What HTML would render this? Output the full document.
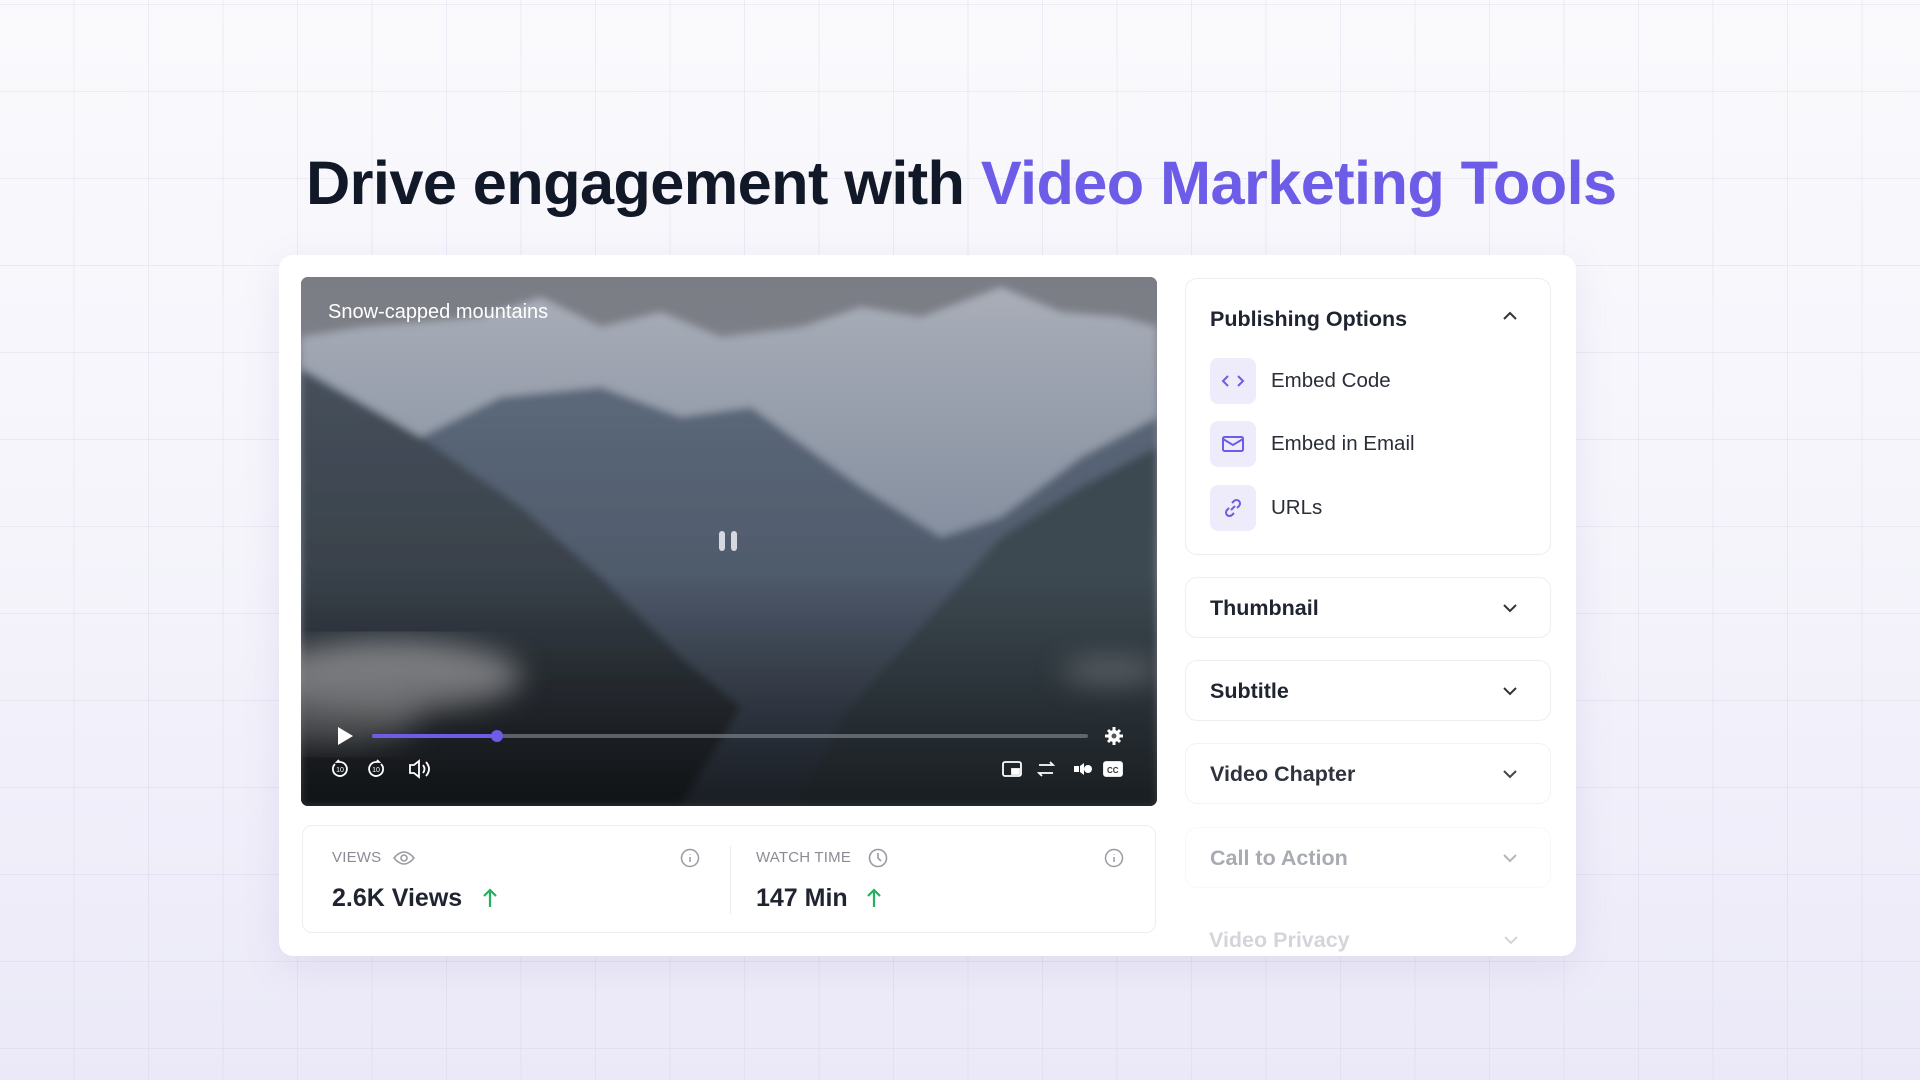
<!DOCTYPE html>
<html><head><meta charset="utf-8">
<style>
*{margin:0;padding:0;box-sizing:border-box}
body{width:1920px;height:1080px;overflow:hidden;font-family:"Liberation Sans",sans-serif;position:relative;
background:linear-gradient(180deg,#fafafd 0%,#f5f4fb 50%,#ebe9f8 100%);}
.grid{position:absolute;inset:0;background-image:linear-gradient(90deg,rgba(200,198,225,.28) 1px,transparent 1px),linear-gradient(0deg,rgba(200,198,225,.28) 1px,transparent 1px);background-size:74.5px 87px;background-position:-1px 5px}
h1{position:absolute;left:306px;top:148px;font-size:61.3px;font-weight:700;color:#111827;letter-spacing:-0.6px;white-space:nowrap}
h1 span{color:#6c5ce7}
.card{position:absolute;left:279px;top:255px;width:1297px;height:701px;background:#fff;border-radius:14px;box-shadow:0 10px 40px rgba(120,110,180,.12)}
.video{position:absolute;left:301px;top:277px;width:856px;height:529px;border-radius:7px;overflow:hidden;background:#5d6673}
.vt{position:absolute;left:27px;top:24px;color:#fff;font-size:20px}
.stats{position:absolute;left:302px;top:825px;width:854px;height:108px;border:1px solid #eeedf3;border-radius:10px}
.lab{position:absolute;font-size:15px;color:#8b8b95;letter-spacing:.2px}
.num{position:absolute;font-size:25px;font-weight:700;color:#1f2430}
.panel{position:absolute;left:1185px;width:366px;border:1px solid #eeedf3;border-radius:12px;background:#fff}
.pt{position:absolute;left:24px;font-size:21.5px;font-weight:700;color:#1f2430}
.chev{position:absolute;right:32px}
.ib{position:absolute;left:24px;width:46px;height:46px;border-radius:8px;background:#eeecfb;display:flex;align-items:center;justify-content:center}
.it{position:absolute;left:85px;font-size:20.5px;color:#2a2e38}
</style></head><body>
<div class="grid"></div>
<h1>Drive engagement with <span>Video Marketing Tools</span></h1>
<div class="card"></div>
<div class="video">
<svg width="856" height="529" viewBox="0 0 856 529">
<defs>
<linearGradient id="sky" x1="0" y1="0" x2="0" y2="1"><stop offset="0" stop-color="#7b7d85"/><stop offset="1" stop-color="#8a909c"/></linearGradient>
<linearGradient id="snow" x1="0" y1="0" x2="0" y2="1"><stop offset="0" stop-color="#a9aeb8"/><stop offset="1" stop-color="#7c889a"/></linearGradient>
<linearGradient id="mid" x1="0" y1="0" x2="0" y2="1"><stop offset="0" stop-color="#5d6a7c"/><stop offset="1" stop-color="#3f4958"/></linearGradient>
<linearGradient id="dark" x1="0" y1="0" x2="0" y2="1"><stop offset="0" stop-color="#46505b"/><stop offset="1" stop-color="#2a3036"/></linearGradient>
<linearGradient id="bot" x1="0" y1="0" x2="0" y2="1"><stop offset="0" stop-color="#000" stop-opacity="0"/><stop offset="1" stop-color="#000" stop-opacity=".6"/></linearGradient>
<filter id="bl"><feGaussianBlur stdDeviation="14"/></filter>
<filter id="bl2"><feGaussianBlur stdDeviation="4"/></filter>
</defs>
<rect width="856" height="529" fill="url(#sky)"/>
<g filter="url(#bl2)">
<polygon points="0,60 60,50 120,45 180,40 240,20 300,50 360,35 420,60 500,50 560,30 620,40 700,10 760,35 820,40 856,50 856,320 0,320" fill="url(#snow)"/>
<polygon points="0,90 120,160 200,120 300,110 380,140 450,130 560,210 640,260 700,240 780,180 856,140 856,529 0,529" fill="url(#mid)"/>
<polygon points="0,95 120,160 220,230 300,300 380,380 440,430 380,529 0,529" fill="url(#dark)"/>
<polygon points="856,170 780,210 700,260 620,350 540,440 500,529 856,529" fill="#3e4851"/>
</g>
<g filter="url(#bl)">
<ellipse cx="90" cy="400" rx="130" ry="35" fill="#c4c4c8" opacity=".75"/>
<ellipse cx="30" cy="440" rx="90" ry="30" fill="#b0b0b4" opacity=".6"/>
<ellipse cx="810" cy="395" rx="50" ry="12" fill="#bfc2c6" opacity=".5"/>
</g>
<rect y="300" width="856" height="229" fill="url(#bot)"/>
<rect x="418" y="254" width="6" height="20" rx="3" fill="#e4e6ec" opacity=".9"/>
<rect x="430" y="254" width="6" height="20" rx="3" fill="#e4e6ec" opacity=".9"/>
<polygon points="37,450 37,468 52,459" fill="#fff"/>
<rect x="71" y="457" width="716" height="4" rx="2" fill="#8a8d94" opacity=".6"/>
<rect x="71" y="457" width="125" height="4" rx="2" fill="#6c5ce7"/>
<circle cx="196" cy="459" r="6" fill="#6c5ce7"/>
<g fill="#fff"><circle cx="813" cy="459" r="6"/><g stroke="#fff" stroke-width="3"><line x1="813" y1="450" x2="813" y2="468"/><line x1="804" y1="459" x2="822" y2="459"/><line x1="807" y1="453" x2="819" y2="465"/><line x1="819" y1="453" x2="807" y2="465"/></g><circle cx="813" cy="459" r="2.5" fill="#555"/></g>
<g fill="none" stroke="#fff" stroke-width="1.8">
<path d="M34 487a7 7 0 1 0 5-2h-3l2-2"/><path d="M80 487a7 7 0 1 1-5-2h3l-2-2"/>
<path d="M109 488h4l5-4v16l-5-4h-4z M122 488q3 4 0 8 M125 485q6 7 0 14"/>
<rect x="702" y="485" width="18" height="14" rx="2"/><rect x="711" y="492" width="7" height="5" fill="#fff"/>
<path d="M738 488h14l-3-3 M752 496h-14l3 3"/>
<rect x="803" y="485" width="18" height="14" rx="2" fill="#fff"/>
</g>
<text x="39" y="495" font-size="7" fill="#fff" text-anchor="middle" font-family="Liberation Sans">10</text>
<text x="75" y="495" font-size="7" fill="#fff" text-anchor="middle" font-family="Liberation Sans">10</text>
<path d="M773 489h5v6h-5z M779 489l4-3v12l-4-3" fill="#fff"/><circle cx="787" cy="492" r="4" fill="#fff"/>
<text x="806" y="496" font-size="8" fill="#333" font-family="Liberation Sans" font-weight="700">CC</text>
</svg>
<div class="vt">Snow-capped mountains</div>
</div>
<div class="stats">
<div class="lab" style="left:29px;top:23px">VIEWS</div>
<svg style="position:absolute;left:90px;top:24px" width="22" height="16" viewBox="0 0 22 16" fill="none" stroke="#9a9aa3" stroke-width="1.6"><path d="M1 8q10-12 20 0q-10 12-20 0z"/><circle cx="11" cy="8" r="3"/></svg>
<svg style="position:absolute;left:377px;top:22px" width="20" height="20" fill="none" stroke="#9a9aa3" stroke-width="1.5"><circle cx="10" cy="10" r="8.5"/><path d="M10 9v5M10 6v.5"/></svg>
<div class="num" style="left:29px;top:58px">2.6K Views</div>
<svg style="position:absolute;left:179px;top:61px" width="16" height="22" fill="none" stroke="#22b35a" stroke-width="2.2"><path d="M8 20V3M2 9l6-6 6 6"/></svg>
<div style="position:absolute;left:427px;top:20px;width:1px;height:68px;background:#ececf1"></div>
<div class="lab" style="left:453px;top:23px">WATCH TIME</div>
<svg style="position:absolute;left:565px;top:22px" width="20" height="20" fill="none" stroke="#9a9aa3" stroke-width="1.6"><circle cx="10" cy="10" r="8.5"/><path d="M10 5v5l3 3"/></svg>
<svg style="position:absolute;left:801px;top:22px" width="20" height="20" fill="none" stroke="#9a9aa3" stroke-width="1.5"><circle cx="10" cy="10" r="8.5"/><path d="M10 9v5M10 6v.5"/></svg>
<div class="num" style="left:453px;top:58px">147 Min</div>
<svg style="position:absolute;left:563px;top:61px" width="16" height="22" fill="none" stroke="#22b35a" stroke-width="2.2"><path d="M8 20V3M2 9l6-6 6 6"/></svg>
</div>

<div class="panel" style="top:278px;height:277px">
<div class="pt" style="top:28px">Publishing Options</div>
<svg class="chev" style="top:32px" width="16" height="10" fill="none" stroke="#333" stroke-width="2"><path d="M2 8l6-6 6 6"/></svg>
<div class="ib" style="top:79px"><svg width="24" height="16" fill="none" stroke="#6c5ce7" stroke-width="2"><path d="M7 3L2 8l5 5M17 3l5 5-5 5"/></svg></div>
<div class="it" style="top:90px">Embed Code</div>
<div class="ib" style="top:142px"><svg width="24" height="18" fill="none" stroke="#6c5ce7" stroke-width="2"><rect x="2" y="2" width="20" height="14" rx="1.5"/><path d="M2 4l10 6 10-6"/></svg></div>
<div class="it" style="top:153px">Embed in Email</div>
<div class="ib" style="top:206px"><svg width="22" height="22" fill="none" stroke="#6c5ce7" stroke-width="2"><path d="M9 13l4-4M10 6l2-2a3.5 3.5 0 015 5l-2 2M12 16l-2 2a3.5 3.5 0 01-5-5l2-2"/></svg></div>
<div class="it" style="top:217px">URLs</div>
</div>
<div class="panel" style="top:577px;height:61px"><div class="pt" style="top:18px">Thumbnail</div><svg class="chev" style="top:25px" width="16" height="10" fill="none" stroke="#333" stroke-width="2"><path d="M2 2l6 6 6-6"/></svg></div>
<div class="panel" style="top:660px;height:61px"><div class="pt" style="top:18px">Subtitle</div><svg class="chev" style="top:25px" width="16" height="10" fill="none" stroke="#333" stroke-width="2"><path d="M2 2l6 6 6-6"/></svg></div>
<div class="panel" style="top:743px;height:61px;border-color:#f3f3f7"><div class="pt" style="top:18px;color:#2f333d">Video Chapter</div><svg class="chev" style="top:25px" width="16" height="10" fill="none" stroke="#444" stroke-width="2"><path d="M2 2l6 6 6-6"/></svg></div>
<div class="panel" style="top:827px;height:61px;border-color:#f8f8fa"><div class="pt" style="top:18px;color:#a9abb2">Call to Action</div><svg class="chev" style="top:25px" width="16" height="10" fill="none" stroke="#b5b6bc" stroke-width="2"><path d="M2 2l6 6 6-6"/></svg></div>
<div class="panel" style="top:910px;height:44px;border:none;background:transparent"><div class="pt" style="top:18px;color:#d4d5da">Video Privacy</div><svg class="chev" style="top:25px" width="16" height="10" fill="none" stroke="#d4d5da" stroke-width="2"><path d="M2 2l6 6 6-6"/></svg></div>
</body></html>
